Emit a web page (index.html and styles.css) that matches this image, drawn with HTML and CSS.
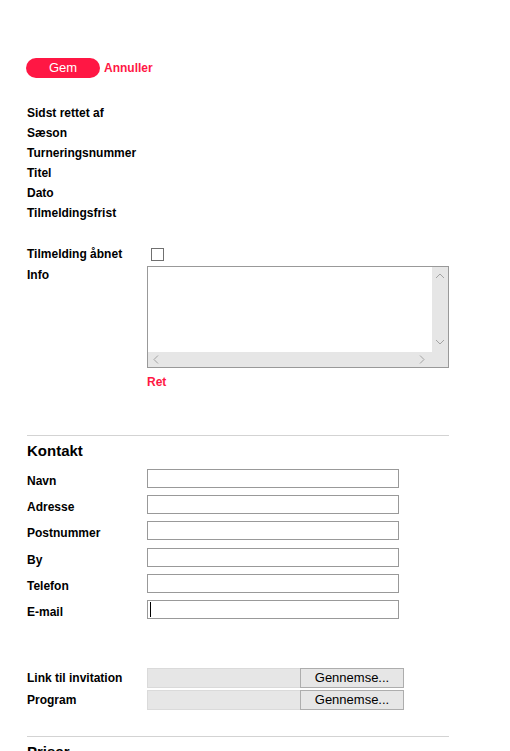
FILE: index.html
```html
<!DOCTYPE html>
<html lang="da">
<head>
<meta charset="utf-8">
<title>Turnering</title>
<link rel="stylesheet" href="styles.css">
</head>
<body>
<div class="page">
  <div class="actions">
    <button class="btn-save" type="button">Gem</button>
    <a class="link-red" href="#">Annuller</a>
  </div>

  <div class="info-list">
    <div class="info-row">Sidst rettet af</div>
    <div class="info-row">Sæson</div>
    <div class="info-row">Turneringsnummer</div>
    <div class="info-row">Titel</div>
    <div class="info-row">Dato</div>
    <div class="info-row">Tilmeldingsfrist</div>
  </div>

  <div class="form-row row-check">
    <label class="lbl">Tilmelding åbnet</label>
    <div class="ctrl"><input class="check" type="checkbox"></div>
  </div>

  <div class="form-row row-info">
    <label class="lbl lbl-top">Info</label>
    <div class="ctrl">
      <div class="fake-area">
        <div class="area-body"></div>
        <div class="vtrack">
          <svg width="16" height="10" viewBox="0 0 16 10"><path d="M4 7 L8 3 L12 7" fill="none" stroke="#a3a3a3" stroke-width="1"/></svg>
          <svg width="16" height="10" viewBox="0 0 16 10"><path d="M4 3 L8 7 L12 3" fill="none" stroke="#a3a3a3" stroke-width="1"/></svg>
        </div>
        <div class="htrack">
          <svg width="10" height="15" viewBox="0 0 10 15"><path d="M7 3.5 L3 7.5 L7 11.5" fill="none" stroke="#a3a3a3" stroke-width="1"/></svg>
          <svg width="10" height="15" viewBox="0 0 10 15"><path d="M3 3.5 L7 7.5 L3 11.5" fill="none" stroke="#a3a3a3" stroke-width="1"/></svg>
        </div>
        <div class="corner"></div>
      </div>
      <a class="link-red ret" href="#">Ret</a>
    </div>
  </div>

  <hr class="sep sep-1">

  <h2 class="section-title">Kontakt</h2>
  <div class="contact">
    <div class="form-row row-input"><label class="lbl">Navn</label><input class="text" type="text"></div>
    <div class="form-row row-input"><label class="lbl">Adresse</label><input class="text" type="text"></div>
    <div class="form-row row-input"><label class="lbl">Postnummer</label><input class="text" type="text"></div>
    <div class="form-row row-input row-shift"><label class="lbl">By</label><input class="text" type="text"></div>
    <div class="form-row row-input"><label class="lbl">Telefon</label><input class="text" type="text"></div>
    <div class="form-row row-input"><label class="lbl">E-mail</label><input class="text focused" type="text"></div>
  </div>

  <div class="files">
    <div class="form-row row-file">
      <label class="lbl">Link til invitation</label>
      <div class="file"><span class="file-name"></span><span class="file-btn">Gennemse...</span></div>
    </div>
    <div class="form-row row-file">
      <label class="lbl">Program</label>
      <div class="file"><span class="file-name"></span><span class="file-btn">Gennemse...</span></div>
    </div>
  </div>

  <hr class="sep sep-2">
  <h2 class="section-title">Priser</h2>
</div>
</body>
</html>
```

FILE: styles.css
```css
* { box-sizing: border-box; }

html, body {
  margin: 0;
  padding: 0;
  background: #ffffff;
}

body {
  font-family: "Liberation Sans", Arial, sans-serif;
  font-size: 12px;
  color: #000;
  overflow: hidden;
}

.page {
  padding: 58px 0 0 27px;
  width: 449px;
}

.actions {
  display: flex;
  align-items: center;
  gap: 4px;
  height: 20px;
  margin-left: -1px;
}

.btn-save {
  width: 74px;
  height: 20px;
  border: none;
  border-radius: 10px;
  background: #ff1744;
  color: #fff;
  font-family: "Liberation Sans", Arial, sans-serif;
  font-size: 13px;
  padding: 0;
  line-height: 20px;
}

.link-red {
  color: #ff1744;
  font-weight: bold;
  font-size: 12px;
  text-decoration: none;
}

.info-list {
  margin-top: 25px;
}

.info-row {
  height: 20px;
  line-height: 20px;
  font-weight: bold;
}

.form-row {
  display: flex;
}

.lbl {
  width: 120px;
  flex: none;
  font-weight: bold;
  line-height: 14px;
}

.row-check {
  margin-top: 21px;
  height: 20px;
  align-items: center;
}

.check {
  appearance: none;
  -webkit-appearance: none;
  display: block;
  width: 13px;
  height: 13px;
  margin: 0 0 0 4px;
  border: 1px solid #707070;
  background: #fff;
  border-radius: 0;
}

.row-info {
  margin-top: 2px;
}

.lbl-top {
  line-height: 16px;
  padding-top: 1px;
}

.fake-area {
  width: 302px;
  height: 102px;
  border: 1px solid #999;
  display: grid;
  grid-template-columns: 1fr 16px;
  grid-template-rows: 1fr 15px;
}

.area-body { background: #fff; }

.vtrack {
  background: #e6e6e6;
  display: flex;
  flex-direction: column;
  justify-content: space-between;
  padding: 4px 0 5px;
}

.htrack {
  background: #e6e6e6;
  display: flex;
  justify-content: space-between;
  padding: 0 5px 0 3px;
}

.vtrack svg, .htrack svg { display: block; }

.corner { background: #e6e6e6; }

.ret {
  display: block;
  margin-top: 7px;
  line-height: 14px;
}

.sep {
  border: none;
  border-top: 1px solid #d3d3d3;
  margin: 0;
  width: 422px;
}

.sep-1 { margin-top: 46px; }

.section-title {
  margin: 6px 0 0;
  font-size: 15px;
  line-height: 18px;
  font-weight: bold;
}

.contact {
  margin-top: 9px;
  display: flex;
  flex-direction: column;
  gap: 7px;
}

.row-input {
  align-items: flex-end;
  height: 19px;
}

.row-shift { margin-top: 1px; }

.text {
  width: 252px;
  height: 19px;
  border: 1px solid #999;
  background: #fff;
  margin: 0;
  padding: 0 2px;
  font: inherit;
  outline: none;
}

.focused {
  background-image: linear-gradient(#000, #000);
  background-repeat: no-repeat;
  background-size: 1px 15px;
  background-position: 2px 1px;
}

.files {
  margin-top: 49px;
  display: flex;
  flex-direction: column;
  gap: 2px;
}

.row-file {
  align-items: center;
  height: 20px;
}

.row-file .lbl { line-height: 20px; }

.file {
  display: flex;
  height: 20px;
}

.file-name {
  width: 153px;
  background: #e6e6e6;
  border: 1px solid #dadada;
  border-right: none;
}

.file-btn {
  width: 104px;
  background: #e6e6e6;
  border: 1px solid #adadad;
  font-size: 13px;
  line-height: 18px;
  text-align: center;
}

.sep-2 { margin-top: 26px; }
```
